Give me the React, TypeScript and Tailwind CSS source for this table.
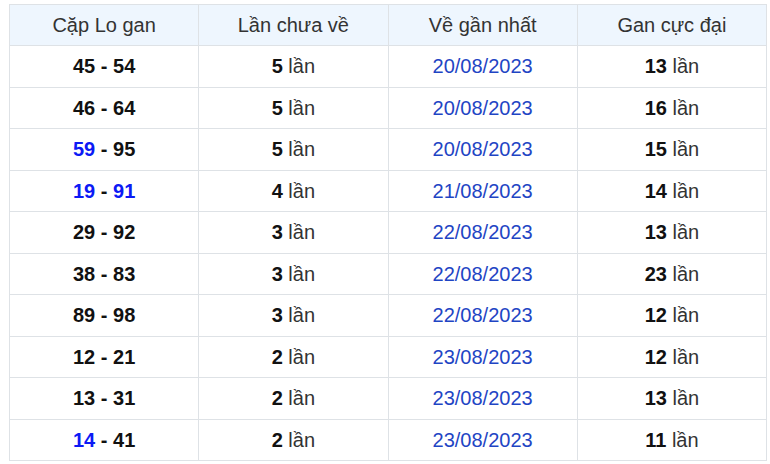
const rows: { a: string; b: string; aBlue?: boolean; bBlue?: boolean; miss: number; date: string; max: number }[] = [
  { a: "45", b: "54", miss: 5, date: "20/08/2023", max: 13 },
  { a: "46", b: "64", miss: 5, date: "20/08/2023", max: 16 },
  { a: "59", b: "95", aBlue: true, miss: 5, date: "20/08/2023", max: 15 },
  { a: "19", b: "91", aBlue: true, bBlue: true, miss: 4, date: "21/08/2023", max: 14 },
  { a: "29", b: "92", miss: 3, date: "22/08/2023", max: 13 },
  { a: "38", b: "83", miss: 3, date: "22/08/2023", max: 23 },
  { a: "89", b: "98", miss: 3, date: "22/08/2023", max: 12 },
  { a: "12", b: "21", miss: 2, date: "23/08/2023", max: 12 },
  { a: "13", b: "31", miss: 2, date: "23/08/2023", max: 13 },
  { a: "14", b: "41", aBlue: true, miss: 2, date: "23/08/2023", max: 11 },
];

export default function App() {
  return (
    <div className="bg-white w-[770px] h-[464px] pl-[9px] pt-[4px] font-['Liberation_Sans',Arial,sans-serif]">
      <table className="w-[758px] border-collapse table-fixed text-[20px] text-center text-[#333]">
        <thead>
          <tr className="bg-[#eef6fe] h-[41px]">
            <th className="border border-[#dee2e6] font-normal">Cặp Lo gan</th>
            <th className="border border-[#dee2e6] font-normal">Lần chưa về</th>
            <th className="border border-[#dee2e6] font-normal">Về gần nhất</th>
            <th className="border border-[#dee2e6] font-normal">Gan cực đại</th>
          </tr>
        </thead>
        <tbody>
          {rows.map((r, i) => (
            <tr key={i} className="h-[41.5px]">
              <td className="border border-[#dee2e6] font-bold text-[#111]">
                <span className={r.aBlue ? "text-[#0c1af5]" : ""}>{r.a}</span>
                {" - "}
                <span className={r.bBlue ? "text-[#0c1af5]" : ""}>{r.b}</span>
              </td>
              <td className="border border-[#dee2e6]">
                <b className="text-[#111]">{r.miss}</b> lần
              </td>
              <td className="border border-[#dee2e6] text-[#1f45c4]">{r.date}</td>
              <td className="border border-[#dee2e6]">
                <b className="text-[#111]">{r.max}</b> lần
              </td>
            </tr>
          ))}
        </tbody>
      </table>
    </div>
  );
}
